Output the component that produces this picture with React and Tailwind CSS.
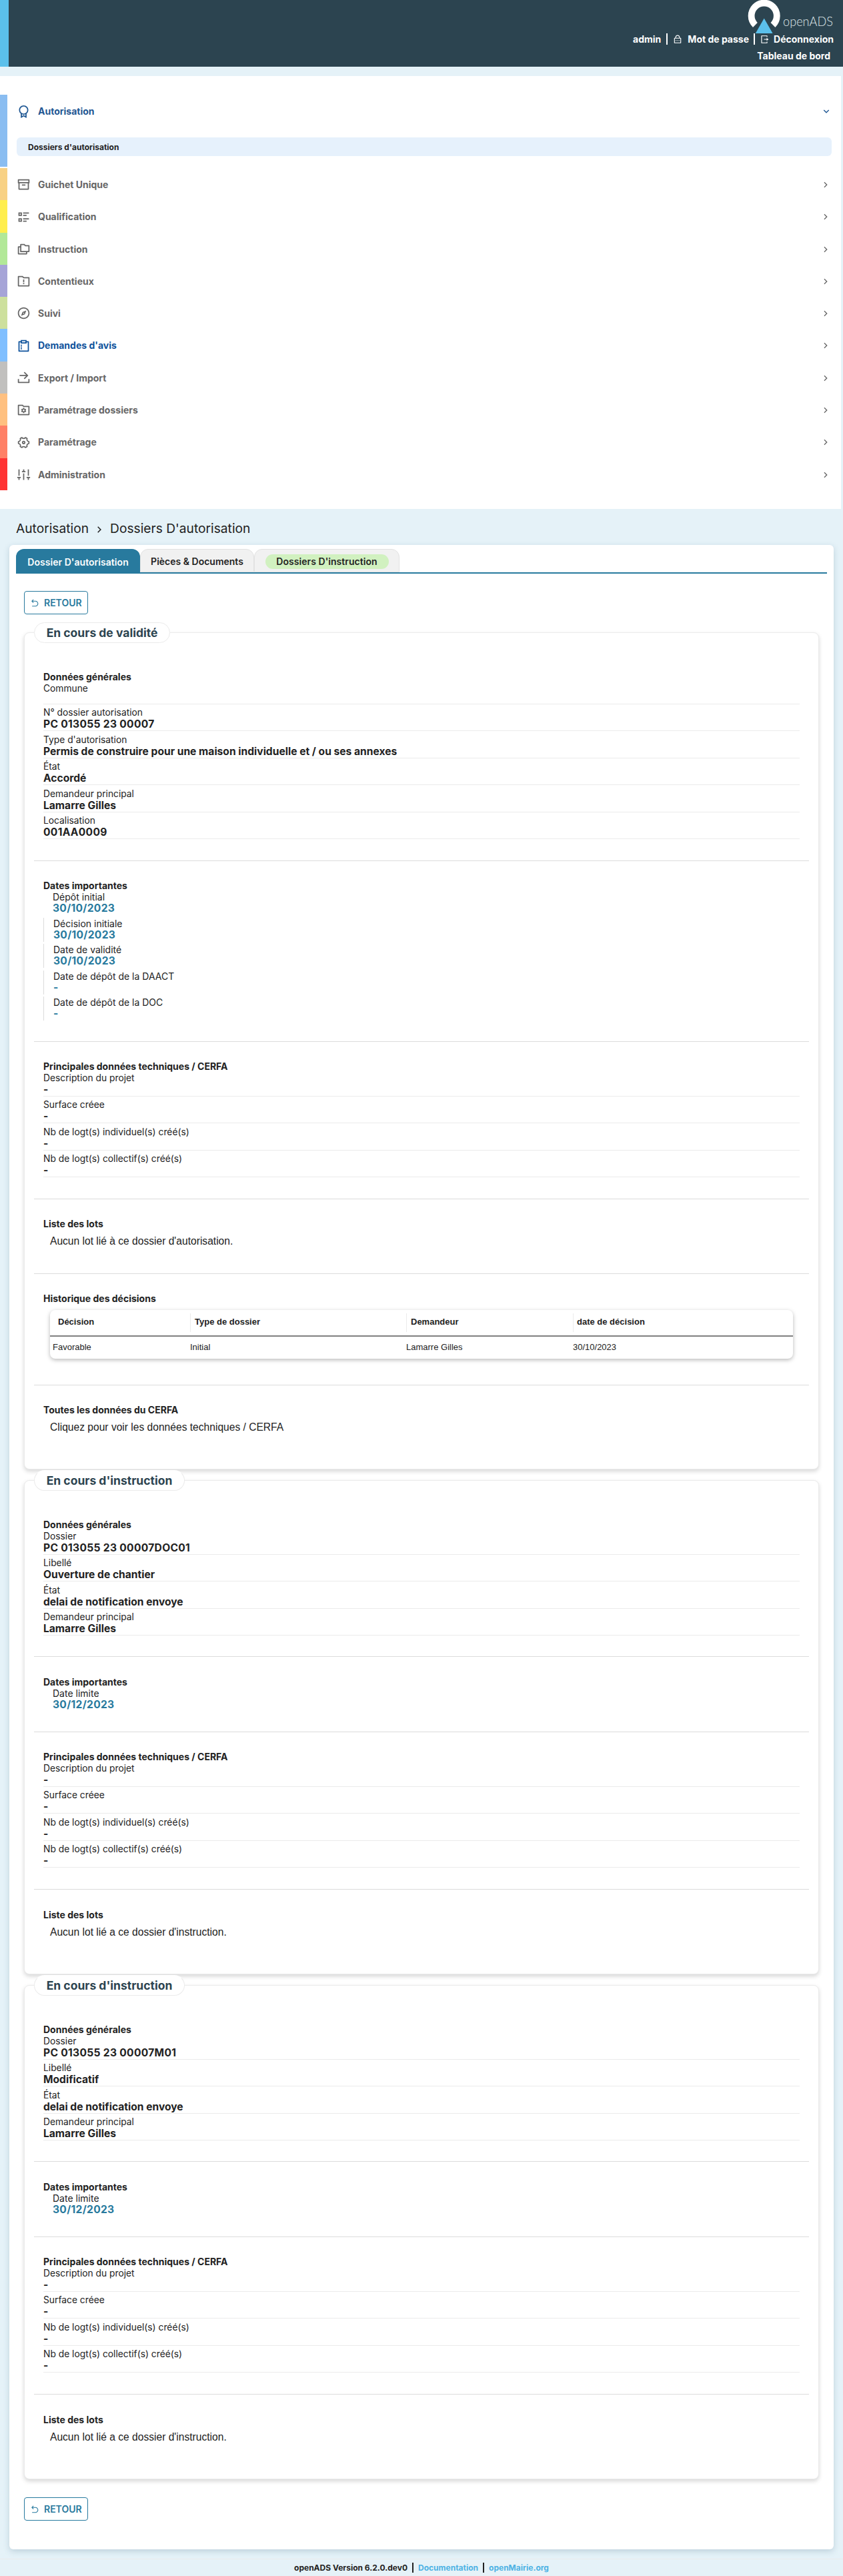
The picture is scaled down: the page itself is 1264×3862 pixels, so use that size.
import React from "react";
import {
  RiAwardLine,
  RiArchiveLine,
  RiListCheck2,
  RiFoldersLine,
  RiFolderWarningLine,
  RiCompass3Line,
  RiSurveyLine,
  RiShareForward2Line,
  RiFolderSettingsLine,
  RiSettings4Line,
  RiSoundModuleLine,
  RiArrowRightSLine,
  RiArrowDownSLine,
  RiArrowGoBackLine,
  RiLockPasswordLine,
  RiLogoutBoxRLine,
} from "react-icons/ri";

const MENU = [
  { label: "Guichet Unique", Icon: RiArchiveLine, bar: "bg-[#f8d184] h-12" },
  { label: "Qualification", Icon: RiListCheck2, bar: "bg-[#ffee4d] h-[49px]" },
  { label: "Instruction", Icon: RiFoldersLine, bar: "bg-[#b2e898] h-12" },
  { label: "Contentieux", Icon: RiFolderWarningLine, bar: "bg-[#a6a4d7] h-12" },
  { label: "Suivi", Icon: RiCompass3Line, bar: "bg-[#cde09d] h-12" },
  { label: "Demandes d'avis", Icon: RiSurveyLine, bar: "bg-[#80bfff] h-[49px]", active: true },
  { label: "Export / Import", Icon: RiShareForward2Line, bar: "bg-[#c1c0be] h-12" },
  { label: "Paramétrage dossiers", Icon: RiFolderSettingsLine, bar: "bg-[#ffc080] h-12" },
  { label: "Paramétrage", Icon: RiSettings4Line, bar: "bg-[#ff8066] h-[49px]" },
  { label: "Administration", Icon: RiSoundModuleLine, bar: "bg-[#ff3333] h-12" },
];

const CERFA = [
  ["Description du projet", "-"],
  ["Surface créee", "-"],
  ["Nb de logt(s) individuel(s) créé(s)", "-"],
  ["Nb de logt(s) collectif(s) créé(s)", "-"],
];

function Logo() {
  return (
    <svg className="block overflow-visible" width="130" height="50" viewBox="0 0 130 50">
      <path d="M12.4 37.4A19.1 19.1 0 1 1 39 37.4" fill="none" stroke="#fff" strokeWidth="9.8" />
      <path d="M25.7 27.5L38.6 50H12.8Z" fill="#5bc0eb" />
      <text x="54" y="38.5" textLength="75" lengthAdjust="spacingAndGlyphs" className="font-[Lato] font-light" fontSize="19.5" fill="#dfe6e9">
        openADS
      </text>
    </svg>
  );
}

function Header() {
  return (
    <header className="flex h-[100px] bg-[#2c4450] text-sm font-bold text-white">
      <div className="w-[13px] bg-[#5bc0eb]" />
      <div className="flex flex-1 flex-col items-end pr-[14px]">
        <Logo />
        <div className="flex h-[17px] items-center">
          <span>admin</span>
          <span className="ml-2 h-[17px] w-[2px] bg-white" />
          <RiLockPasswordLine className="ml-2 size-[14px]" />
          <span className="ml-2">Mot de passe</span>
          <span className="ml-[7px] h-[17px] w-[2px] bg-white" />
          <RiLogoutBoxRLine className="ml-[7px] size-[14px]" />
          <span className="ml-[7px]">Déconnexion</span>
        </div>
        <div className="mt-2 mr-[5px] h-[17px] leading-[17px]">Tableau de bord</div>
      </div>
    </header>
  );
}

function Menu() {
  return (
    <nav className="mt-[14px] mr-[3px] h-[649px] bg-white pt-7 text-sm font-bold">
      <div className="mb-[2px] flex h-[108px]">
        <div className="w-[11px] bg-[#8abdf1]" />
        <div className="flex-1 pl-[14px] pr-[14px]">
          <div className="flex h-[50px] items-center text-[#1f5793]">
            <RiAwardLine className="size-[21px]" />
            <span className="ml-[11px]">Autorisation</span>
            <RiArrowDownSLine className="ml-auto size-4" />
          </div>
          <div className="mt-[14px] flex h-7 items-center rounded-md bg-[#e6f1fc] pt-px pl-[17px] text-xs text-[#222]">
            Dossiers d'autorisation
          </div>
        </div>
      </div>
      {MENU.map(({ label, Icon, bar, active }) => (
        <div key={label} className="flex">
          <div className={"w-[11px] " + bar} />
          <div
            className={
              "flex flex-1 items-center pt-px pr-[15px] pl-[14px] " +
              (active ? "text-[#0f539c]" : "text-[#666]")
            }
          >
            <Icon className="size-[21px]" />
            <span className="ml-[11px]">{label}</span>
            <RiArrowRightSLine className="ml-auto size-4 text-[#666]" />
          </div>
        </div>
      ))}
    </nav>
  );
}

function Tabs() {
  return (
    <div className="mx-[10px] flex h-[37px] border-b-2 border-[#287a9e] text-sm font-semibold text-[#222]">
      <div className="flex w-[186px] items-center justify-center rounded-t-xl bg-[#287a9e] pt-1 tracking-[0.05px] text-white">
        Dossier D'autorisation
      </div>
      <div className="flex w-[171px] items-center justify-center rounded-t-xl border border-[#e2e2e2] bg-[#f1f1f1] pt-[3px]">
        Pièces &amp; Documents
      </div>
      <div className="flex w-[218px] items-center justify-center rounded-t-xl border border-[#e2e2e2] bg-[#f1f1f1] pt-[3px]">
        <span className="flex h-[22px] w-[185px] items-center justify-center rounded-full bg-[#d1f1c0] tracking-[0.05px]">
          Dossiers D'instruction
        </span>
      </div>
    </div>
  );
}

function BackButton() {
  return (
    <button className="flex h-[35px] w-24 items-center rounded border border-[#287a9e] pl-[9px] text-sm font-semibold text-[#287a9e]">
      <RiArrowGoBackLine className="mt-[2px] size-[13px]" />
      <span className="ml-[7px]">RETOUR</span>
    </button>
  );
}

function Fieldset({ title, legend, className, children }) {
  return (
    <section
      className={
        "w-[1192px] rounded-lg border border-[#ebebeb] bg-white px-[14px] shadow-[0_3px_6px_rgba(0,0,0,0.16)] " +
        className
      }
    >
      <h2
        className={
          "relative -top-4 flex items-center justify-center rounded-full border bg-white pt-px text-[17.5px] font-bold text-[#2c4450] " +
          legend
        }
      >
        {title}
      </h2>
      {children}
    </section>
  );
}

function Block({ title, className, children }) {
  return (
    <div className={"border-[#dcdcdc] pl-[14px] " + className}>
      <h3 className="h-[17px] text-sm leading-[17px] font-bold">{title}</h3>
      {children}
    </div>
  );
}

function Value({ className, children }) {
  const spaced = /\d/.test(children) ? " tracking-[0.3px]" : "";
  return <dd className={"text-[15.6px] font-bold " + className + spaced}>{children}</dd>;
}

function Rows({ rows }) {
  return (
    <dl className="w-[1134px] leading-[17px]">
      {rows.map(([label, value], i) => (
        <div
          key={label}
          className={"border-b border-[#ebebeb] " + (i === 0 ? "pt-[0.6px]" : "h-[40.5px] pt-[4.7px]")}
        >
          <dt className="h-[17px] text-[13.8px]">{label}</dt>
          <Value className={value ? "h-[18px]" : "h-[14px]"}>{value}</Value>
        </div>
      ))}
    </dl>
  );
}

function Dates({ rows }) {
  return (
    <dl className="leading-[17px]">
      {rows.map(([label, value], i) => (
        <div
          key={label}
          className={i === 0 ? "h-9 pl-[14px]" : "mt-[3.6px] h-9 border-l border-[#dcdcdc] pl-[14px]"}
        >
          <dt className="h-[17px] text-sm leading-[17px]">{label}</dt>
          <Value className="h-[17px] text-[#287a9e]">{value}</Value>
        </div>
      ))}
    </dl>
  );
}

function Note({ children }) {
  return (
    <p className="mt-[9px] pl-[10px] font-['Liberation_Sans'] text-[15.6px] leading-[18px]">{children}</p>
  );
}

function History() {
  return (
    <div className="mt-[9px] ml-[10px] h-[73px] w-[1114px] rounded-lg bg-white font-['Liberation_Sans'] text-[13px] shadow-[0_2px_6px_rgba(0,0,0,0.28)]">
      <div className="flex h-10 border-b-2 border-[#808080] pt-[5px] font-bold leading-[26px]">
        <div className="w-[210px] pl-3">Décision</div>
        <div className="h-7 w-[324px] border-l border-[#ebebeb] pl-[6px]">Type de dossier</div>
        <div className="h-7 w-[250px] border-l border-[#ebebeb] pl-[6px]">Demandeur</div>
        <div className="h-7 border-l border-[#ebebeb] pl-[5px]">date de décision</div>
      </div>
      <div className="flex leading-[32px]">
        <div className="w-[210px] pl-1">Favorable</div>
        <div className="w-[324px]">Initial</div>
        <div className="w-[250px]">Lamarre Gilles</div>
        <div>30/10/2023</div>
      </div>
    </div>
  );
}

function Instruction({ dossier, libelle, className }) {
  return (
    <Fieldset
      title="En cours d'instruction"
      legend="h-[31px] w-[226px] border-[#ebebeb] border-t-transparent"
      className={"h-[741px] " + className}
    >
      <Block title="Données générales" className="mt-[26px] h-[207px] border-b">
        <Rows
          rows={[
            ["Dossier", dossier],
            ["Libellé", libelle],
            ["État", "delai de notification envoye"],
            ["Demandeur principal", "Lamarre Gilles"],
          ]}
        />
      </Block>
      <Block title="Dates importantes" className="h-[113px] border-b pt-[28.5px]">
        <Dates rows={[["Date limite", "30/12/2023"]]} />
      </Block>
      <Block title="Principales données techniques / CERFA" className="h-[236px] border-b pt-7">
        <Rows rows={CERFA} />
      </Block>
      <Block title="Liste des lots" className="pt-[28.5px]">
        <Note>Aucun lot lié a ce dossier d'instruction.</Note>
      </Block>
    </Fieldset>
  );
}

export default function App() {
  return (
    <div className="h-[3862px] w-[1264px] bg-[#e5f2f8] font-[Inter,sans-serif] text-[#222]">
      <Header />
      <Menu />
      <div className="flex h-[54px] items-center pt-[5px] pl-6 text-[19.2px]">
        <span>Autorisation</span>
        <RiArrowRightSLine className="mx-[7px] mt-[2px] size-[18px]" />
        <span>Dossiers D'autorisation</span>
      </div>
      <main className="ml-[14px] h-[3005px] w-[1236px] rounded-md bg-white pt-[6px] shadow-[0_3px_10px_rgba(44,90,120,0.22)]">
        <Tabs />
        <div className="pt-[26px] pl-[22px]">
          <BackButton />
          <Fieldset title="En cours de validité" legend="h-[31px] w-[204px] border-[#ebebeb]" className="mt-[27px] h-[1255px]">
            <Block title="Données générales" className="mt-[26px] h-[285px] border-b">
              <Rows
                rows={[
                  ["Commune", ""],
                  ["N° dossier autorisation", "PC 013055 23 00007"],
                  ["Type d'autorisation", "Permis de construire pour une maison individuelle et / ou ses annexes"],
                  ["État", "Accordé"],
                  ["Demandeur principal", "Lamarre Gilles"],
                  ["Localisation", "001AA0009"],
                ]}
              />
            </Block>
            <Block title="Dates importantes" className="h-[271px] border-b pt-7">
              <Dates
                rows={[
                  ["Dépôt initial", "30/10/2023"],
                  ["Décision initiale", "30/10/2023"],
                  ["Date de validité", "30/10/2023"],
                  ["Date de dépôt de la DAACT", "-"],
                  ["Date de dépôt de la DOC", "-"],
                ]}
              />
            </Block>
            <Block title="Principales données techniques / CERFA" className="h-[236px] border-b pt-7">
              <Rows rows={CERFA} />
            </Block>
            <Block title="Liste des lots" className="h-[112px] border-b pt-7">
              <Note>Aucun lot lié à ce dossier d'autorisation.</Note>
            </Block>
            <Block title="Historique des décisions" className="h-[167px] border-b pt-[28px]">
              <History />
            </Block>
            <Block title="Toutes les données du CERFA" className="pt-7">
              <Note>Cliquez pour voir les données techniques / CERFA</Note>
            </Block>
          </Fieldset>
          <Instruction dossier="PC 013055 23 00007DOC01" libelle="Ouverture de chantier" className="mt-4" />
          <Instruction dossier="PC 013055 23 00007M01" libelle="Modificatif" className="mt-4" />
          <div className="pt-[27px]">
            <BackButton />
          </div>
        </div>
      </main>
      <footer className="mt-[14px] flex h-[26px] items-center justify-center gap-[7px] border-t border-[#ebebeb] text-xs font-bold">
        <span>openADS Version 6.2.0.dev0</span>
        <span className="h-[15px] w-[2px] bg-[#222]" />
        <span className="text-[#4db2e4]">Documentation</span>
        <span className="h-[15px] w-[2px] bg-[#222]" />
        <span className="text-[#4db2e4]">openMairie.org</span>
      </footer>
    </div>
  );
}
